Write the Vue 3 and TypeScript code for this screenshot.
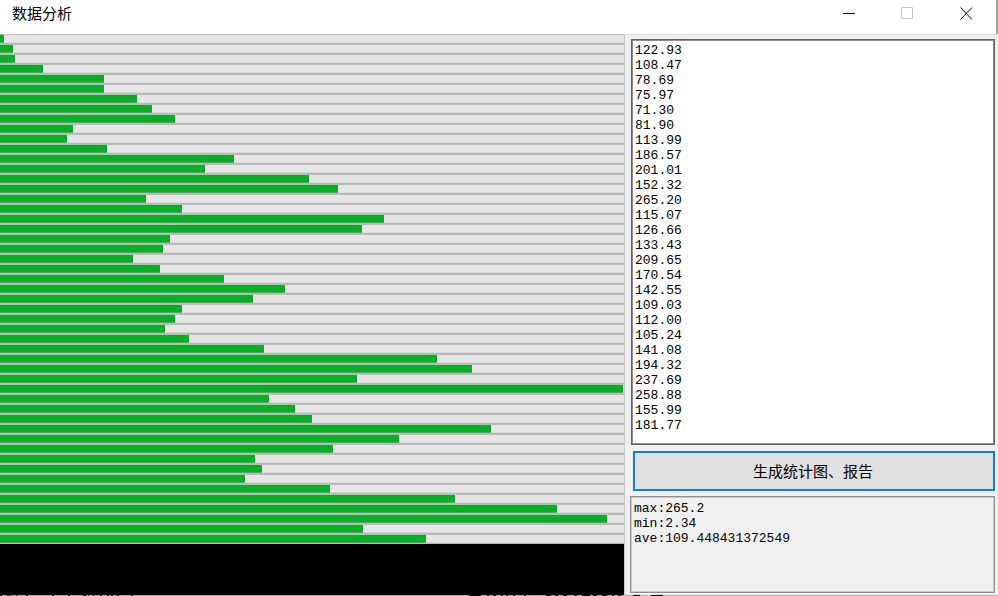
<script setup lang="ts">
import { ref } from 'vue'

const FULL_SCALE = 624

const bars: number[] = [
  4, 13, 15, 43, 104, 104, 137, 152, 175, 73, 67, 107, 234, 205, 309, 338, 146,
  182, 384, 362, 170, 163, 133, 160, 224, 285, 253, 182, 175, 165, 189, 264,
  437, 472, 357, 623, 269, 295, 312, 491, 399, 333, 255, 262, 245, 330, 455,
  557, 607, 363, 426,
]

const samples = ref(
  [
    '122.93', '108.47', '78.69', '75.97', '71.30', '81.90', '113.99', '186.57',
    '201.01', '152.32', '265.20', '115.07', '126.66', '133.43', '209.65',
    '170.54', '142.55', '109.03', '112.00', '105.24', '141.08', '194.32',
    '237.69', '258.88', '155.99', '181.77',
  ].join('\n'),
)

const report = ref(['max:265.2', 'min:2.34', 'ave:109.448431372549'].join('\n'))
</script>

<template>
  <div class="window">
    <header class="titlebar">
      <h1 class="title">数据分析</h1>
      <div class="controls">
        <button type="button" class="control" aria-label="最小化">
          <svg viewBox="0 0 13 13" width="13" height="13"><path d="M1 6.5h12" /></svg>
        </button>
        <button type="button" class="control" aria-label="最大化" disabled>
          <svg viewBox="0 0 13 13" width="13" height="13"><path d="M.5 .5h11v11H.5z" /></svg>
        </button>
        <button type="button" class="control" aria-label="关闭">
          <svg viewBox="0 0 13 13" width="13" height="13"><path d="M.5 .5l11.5 12M12 .5l-11.5 12" /></svg>
        </button>
      </div>
    </header>
    <main class="content">
      <section class="chart">
        <progress
          v-for="(value, index) in bars"
          :key="index"
          class="bar"
          :max="FULL_SCALE"
          :value="value"
          :aria-label="String(index + 1)"
        ></progress>
      </section>
      <aside class="panel">
        <textarea v-model="samples" class="samples" aria-label="数据" spellcheck="false"></textarea>
        <button type="button" class="generate">生成统计图、报告</button>
        <textarea v-model="report" class="report" aria-label="报告" readonly></textarea>
      </aside>
    </main>
    <svg class="edge" aria-hidden="true">
      <path
        d="M0 .5h2M7 .5h2M10 .5h1M16 .5h1M26 .5h2M52 .5h2M68 .5h2M83 .5h3M88 .5h1M93 .5h1M100 .5h2M107 .5h2M111 .5h2M117 .5h2M131 .5h2M469 .5h12M487 .5h2M493 .5h3M501 .5h2M506 .5h2M513 .5h2M524 .5h2M546 .5h5M555 .5h3M563 .5h4M574 .5h3M582 .5h8M593 .5h4M602 .5h5M612 .5h2M618 .5h3M633 .5h7M651 .5h12"
      />
    </svg>
  </div>
</template>

<style>
body {
  margin: 0;
  overflow: hidden;
}
</style>

<style scoped>
.window {
  display: flex;
  flex-direction: column;
  height: 100vh;
  background: #f0f0f0;
  color: #000;
  font-family: "Noto Sans CJK SC", sans-serif;
}

.titlebar {
  display: flex;
  flex: none;
  justify-content: space-between;
  height: 34px;
  border-right: 2px solid #a0a0a0;
  background: #fff;
}

.title {
  margin: 0;
  padding-left: 12px;
  font-size: 15px;
  font-weight: 400;
  line-height: 25px;
}

.controls {
  display: flex;
}

.control {
  display: flex;
  align-items: center;
  justify-content: center;
  width: 59px;
  height: 26px;
  padding: 0;
  border: 0;
  background: transparent;
}

.control svg {
  fill: none;
  stroke: #000;
  stroke-width: 1;
}

.control:disabled svg {
  stroke: #c8c8c8;
}

.content {
  display: grid;
  flex: 1;
  grid-template-columns: 624fr 374fr;
  min-height: 0;
}

.chart {
  display: flex;
  flex-direction: column;
  min-width: 0;
  background: #000;
}

.bar {
  display: block;
  flex: none;
  width: 100%;
  height: 10px;
  border: 0;
  appearance: none;
  background: transparent;
}

.bar::-webkit-progress-bar {
  background: linear-gradient(#bababa 1px, #e6e6e6 1px, #e6e6e6 8px, #d8d8d8 8px, #d8d8d8 9px, #bababa 9px);
}

.bar::-webkit-progress-value {
  background: linear-gradient(#a5c7aa 1px, #06b025 1px, #06b025 8px, #58a568 8px, #58a568 9px, #a5c7aa 9px);
}

.panel {
  box-sizing: border-box;
  display: flex;
  flex-direction: column;
  min-width: 0;
  padding: 4px 3px 2px 5px;
  border-top: 1px solid #dedede;
  border-left: 1px solid #c8c8c8;
}

.samples,
.report {
  box-sizing: border-box;
  display: block;
  margin: 0;
  border-radius: 0;
  outline: 0;
  overflow: hidden;
  resize: none;
  color: #000;
  font-family: "Liberation Mono", "Noto Sans CJK SC", monospace;
  font-size: 13px;
  line-height: 15px;
}

.samples {
  flex: 1;
  margin-left: 1px;
  padding: 3px;
  border: 1px solid #646464;
  box-shadow: inset 0 0 0 1px #8c8c8c;
  background: #fff;
}

.generate {
  height: 40px;
  margin: 6px 0 5px 3px;
  padding: 0 2px 2px 0;
  border: 2px solid #1080d8;
  border-radius: 0;
  background: #e1e1e1;
  color: #000;
  font-family: inherit;
  font-size: 15px;
}

.report {
  height: 97px;
  padding: 4px 3px;
  border: 1px solid #909090;
  box-shadow: inset 0 0 0 1px #c8c8c8;
  background: #f0f0f0;
}

.edge {
  flex: none;
  width: 100%;
  height: 1px;
  background: #a8b5a8;
  stroke: #000;
}
</style>
